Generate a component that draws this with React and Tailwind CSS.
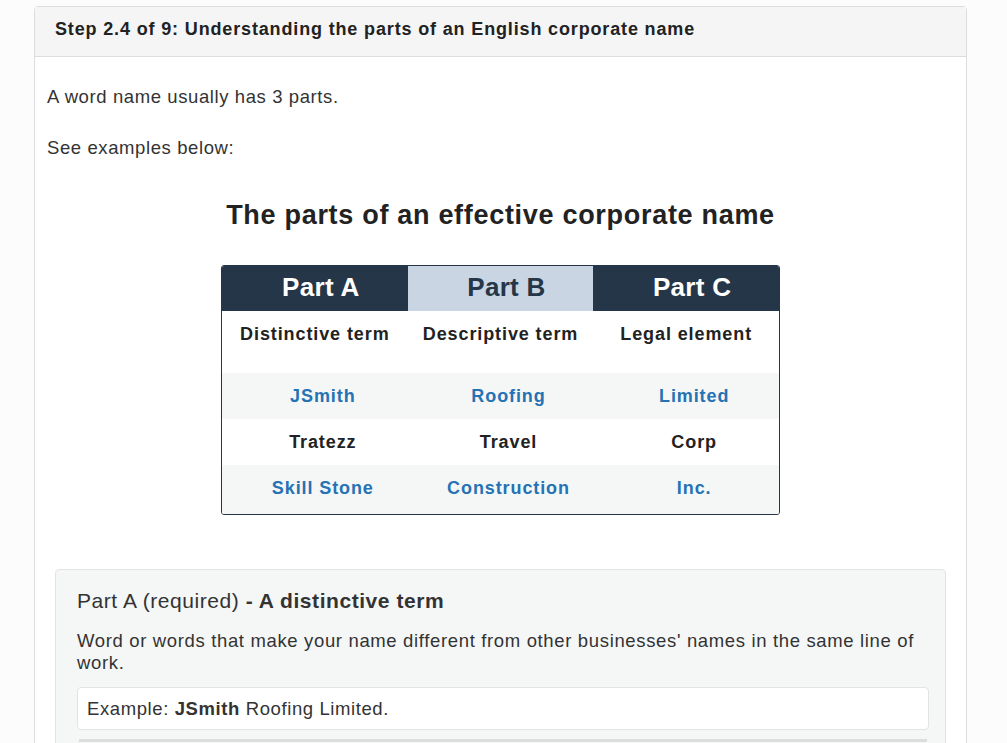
import React from 'react'

const rows = [
  { cells: ['JSmith', 'Roofing', 'Limited'], link: true, striped: true },
  { cells: ['Tratezz', 'Travel', 'Corp'], link: false, striped: false },
  { cells: ['Skill Stone', 'Construction', 'Inc.'], link: true, striped: true },
]

function PartsTable() {
  return (
    <div className="mx-auto w-[559px] border border-[#253648] rounded-[3px] overflow-hidden">
      <div className="grid grid-cols-3 h-[45px] text-[26px] font-bold leading-none tracking-[0.3px]">
        <div className="bg-[#253648] text-white flex items-center justify-center pl-3 pb-[3px]">Part A</div>
        <div className="bg-[#c9d5e2] text-[#253648] flex items-center justify-center pl-3 pb-[3px]">Part B</div>
        <div className="bg-[#253648] text-white flex items-center justify-center pl-3 pb-[3px]">Part C</div>
      </div>
      <div className="grid grid-cols-3 h-[62px] bg-white text-[18px] font-bold tracking-[0.9px] text-[#222] pt-[10px]">
        <div className="text-center">Distinctive term</div>
        <div className="text-center">Descriptive term</div>
        <div className="text-center">Legal element</div>
      </div>
      {rows.map((r, i) => (
        <div
          key={i}
          className={`grid grid-cols-3 h-[46px] items-center text-[18px] font-bold tracking-[0.9px] ${r.striped ? 'bg-[#f5f7f7]' : 'bg-white'} ${r.link ? 'text-[#2572b4]' : 'text-[#222]'}`}
        >
          {r.cells.map((c) => (
            <div key={c} className="text-center pl-4">{c}</div>
          ))}
        </div>
      ))}
      <div className="h-[3px] bg-[#f5f7f7]" />
    </div>
  )
}

export default function App() {
  return (
    <div className="h-[743px] overflow-hidden bg-[#fcfcfc] pt-[6px] text-[#333]" style={{ fontFamily: '"Liberation Sans", Arial, sans-serif' }}>
      <div className="ml-[34px] w-[933px] bg-white border border-[#dddddd] rounded-[4px]">
        <div className="h-[50px] bg-[#f5f5f5] border-b border-[#dddddd] px-[20px] pb-[5px] flex items-center text-[18px] font-bold tracking-[0.85px] text-[#222]">
          Step 2.4 of 9: Understanding the parts of an English corporate name
        </div>
        <div className="px-[12px] pt-[28px]">
          <p className="text-[18.5px] leading-[24px] tracking-[0.6px]">A word name usually has 3 parts.</p>
          <p className="text-[18.5px] leading-[24px] tracking-[0.6px] mt-[27px]">See examples below:</p>
          <h2 className="text-center text-[27px] font-bold tracking-[0.7px] text-[#222] mt-[39px] leading-[32px]">
            The parts of an effective corporate name
          </h2>
          <div className="mt-[34px]">
            <PartsTable />
          </div>
          <div className="mt-[54px] mx-[8px] bg-[#f5f7f7] border border-[#e3e3e3] rounded-[4px] pl-[21px] pr-[16px] pt-[18px] pb-[10px]">
            <h3 className="text-[21px] leading-[26px] tracking-[0.55px] text-[#333]">
              Part A (required) <span className="font-bold">- A distinctive term</span>
            </h3>
            <p className="mt-[16px] text-[18.5px] leading-[22px] tracking-[0.65px] text-[#333]">
              Word or words that make your name different from other businesses' names in the same line of work.
            </p>
            <div className="mt-[13px] bg-white border border-[#e3e3e3] rounded-[4px] h-[43px] px-[9px] flex items-center text-[18.5px] tracking-[0.6px] text-[#333]">
              <span>
                Example: <span className="font-bold">JSmith</span> Roofing Limited.
              </span>
            </div>
            <div className="mt-[9px] border-t-[3px] border-[#dddddd] h-[20px] mx-[2px]" />
          </div>
        </div>
      </div>
    </div>
  )
}
